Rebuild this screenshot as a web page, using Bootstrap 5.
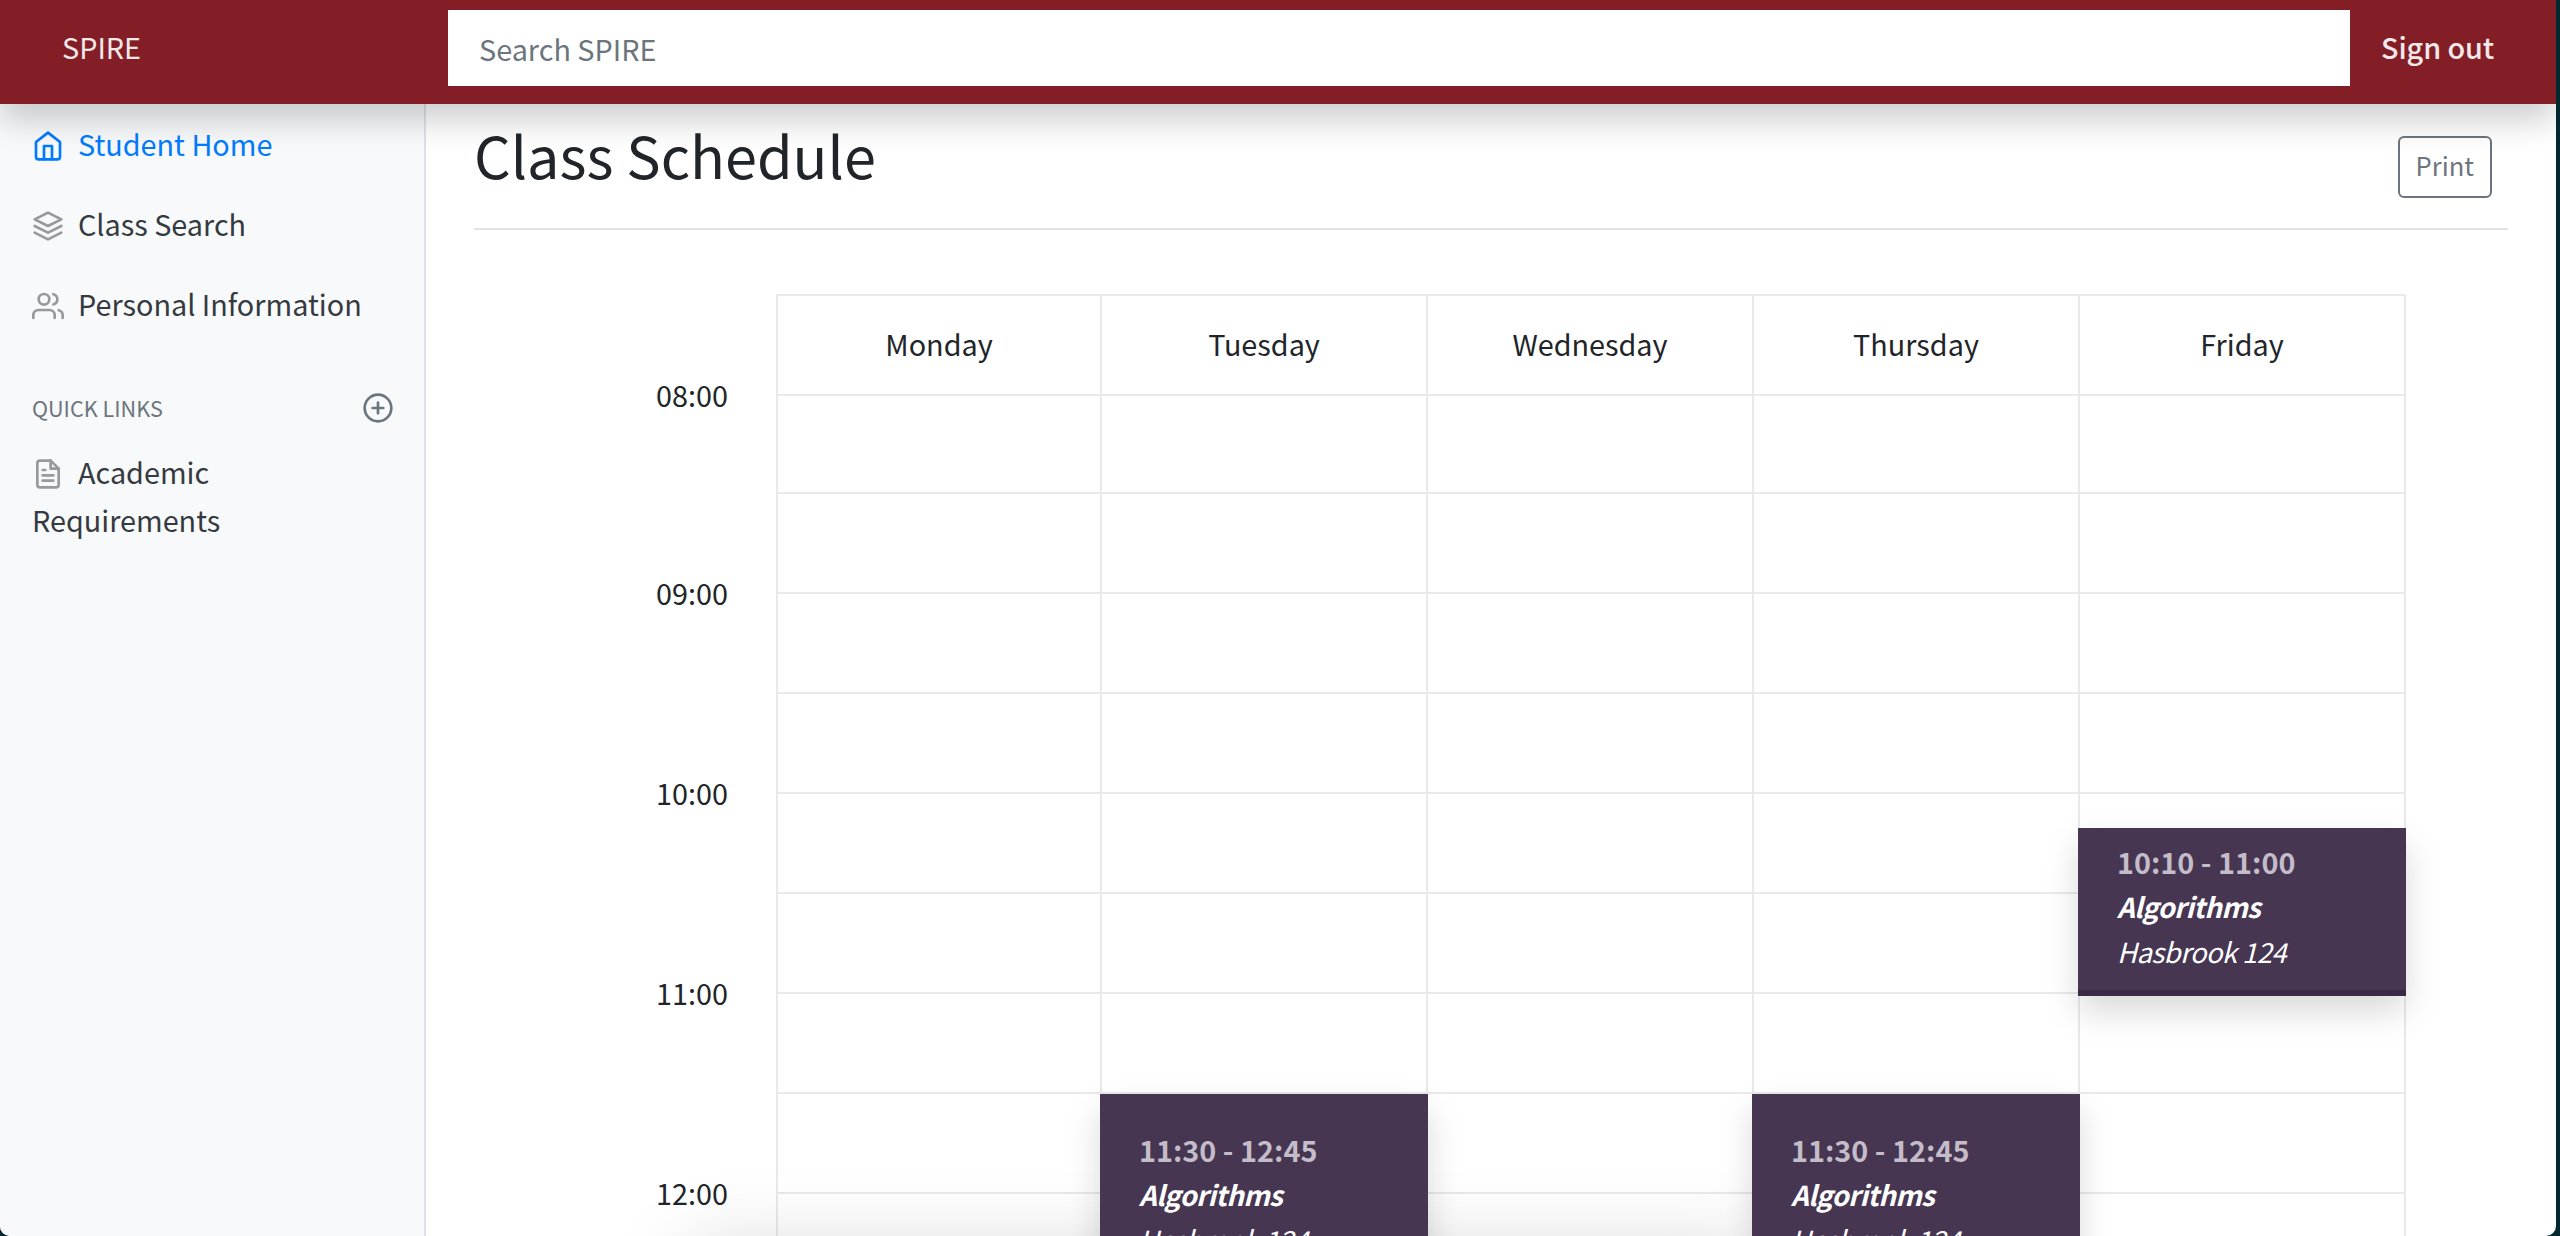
<!DOCTYPE html>
<html lang="en">
<head>
  <meta charset="UTF-8">
  <title>SPIRE</title>
  <link href="https://cdn.jsdelivr.net/npm/bootstrap@5.3.3/dist/css/bootstrap.min.css" rel="stylesheet">
  <style>
    html, body { height: 100%; overflow: hidden; }
    body { font-family: "Noto Sans CJK SC", "Noto Sans", sans-serif; font-size: 28.8px; line-height: 48px; color: #212529; background: #04282f; }
    .app-window { width: 2556px; height: 1236px; background: #fff; position: relative; overflow: hidden; border-radius: 0 0 10px 10px; }

    .topbar { height: 104px; padding: 10px 0 0; background: #841e26; position: relative; z-index: 5; align-items: flex-start; flex-wrap: nowrap; box-shadow: 0 16px 32px rgba(0,0,0,.2); }
    .topbar a { color: #f1e8e9; text-decoration: none; padding: 13px 0; }
    .brand-link { width: 448px; padding-left: 62px !important; flex: none; }
    .topbar .search-box { flex: 1; width: auto; height: 76px; border: 0; border-radius: 0; padding: 0 31px; font-size: 28.8px; line-height: 48px; }
    .search-box::placeholder { color: #6c757d; opacity: 1; }
    .signout-link { width: 206px; flex: none; padding-left: 31px !important; font-weight: 500; letter-spacing: -.1px; }

    .side-panel { width: 426px; height: 1132px; flex: none; background: #f8f9fa; border-right: 2px solid #dee2e6; }
    .side-link { display: block; padding: 16px 32px; color: #343a40; text-decoration: none; white-space: nowrap; }
    .side-link svg, .doc-link svg { width: 32px; height: 32px; margin-right: 14px; vertical-align: -6px; color: #999; }
    .side-link.current, .side-link.current svg { color: #007bff; }
    .side-head { display: flex; justify-content: space-between; align-items: center; padding: 0 30px 0 32px; margin-top: 46px; font-size: 21.6px; line-height: 36px; color: #6c757d; }
    .side-head svg { width: 32px; height: 32px; }
    .doc-link { display: block; padding: 22px 32px 0; color: #343a40; text-decoration: none; }

    .main-col { flex: 1; padding: 0 48px; }
    .title-row { height: 126px; border-bottom: 2px solid #e1e3e5; align-items: flex-start; justify-content: space-between; }
    .title-row h1 { font-size: 57.6px; line-height: 76px; margin: 12px 0 0; font-weight: 400; }
    .print-btn { font-size: 25.6px; line-height: 42px; color: #6c757d; border: 2px solid #6c757d; padding: 6px 16px 10px; margin: 32px 16px 0 0; border-radius: 6px; background: #fff; }

    .cal-wrap { position: relative; margin-top: 64px; }
    .cal-grid { display: grid; grid-template-columns: 302px repeat(5, 326px); grid-auto-rows: 100px; grid-template-rows: 102px 98px; }
    .day-cell { border: solid #e9e9e9; border-width: 2px 2px 2px 0; padding-bottom: 2px; display: flex; align-items: center; justify-content: center; color: #212529; }
    .day-cell.first-col, .slot-cell.first-col { border-left-width: 2px; }
    .slot-cell { border: solid #e9e9e9; border-width: 0 2px 2px 0; }
    .hour-cell { text-align: right; padding-right: 48px; margin-top: -25px; }

    .class-block { position: absolute; z-index: 1; width: 328px; display: flex; flex-direction: column; justify-content: center; background: #463652; border-bottom: 6px solid #3b2a47; padding: 0 0 6px 39px; color: #fff; line-height: 45px; font-size: 27.5px; letter-spacing: -.6px; font-style: italic; box-shadow: 0 16px 32px rgba(0,0,0,.15); }
    .class-block b { font-weight: 700; }
    .class-block .when { font-size: 28.8px; letter-spacing: 0; font-style: normal; font-weight: 700; color: #c4bcc9; }
    .block-fri { left: 1604px; top: 534px; height: 168px; }
    .block-tue { left: 626px; top: 800px; height: 212px; }
    .block-thu { left: 1278px; top: 800px; height: 212px; }
    .bottom-shade { position: absolute; left: 216px; top: 952px; width: 1070px; height: 200px; box-shadow: 0 0 80px rgba(0,0,0,.15); }
  </style>
</head>
<body>
<div class="app-window">
  <nav class="topbar navbar">
    <a class="brand-link" href="#">SPIRE</a>
    <input class="search-box form-control" type="text" placeholder="Search SPIRE">
    <a class="signout-link" href="#">Sign out</a>
  </nav>

  <div class="d-flex">
    <div class="side-panel">
      <a class="side-link current" href="#">
        <svg viewBox="0 0 24 24" fill="none" stroke="currentColor" stroke-width="2" stroke-linecap="round" stroke-linejoin="round"><path d="M3 9l9-7 9 7v11a2 2 0 0 1-2 2H5a2 2 0 0 1-2-2z"/><polyline points="9 22 9 12 15 12 15 22"/></svg>Student Home
      </a>
      <a class="side-link" href="#">
        <svg viewBox="0 0 24 24" fill="none" stroke="currentColor" stroke-width="2" stroke-linecap="round" stroke-linejoin="round"><polygon points="12 2 2 7 12 12 22 7 12 2"/><polyline points="2 17 12 22 22 17"/><polyline points="2 12 12 17 22 12"/></svg>Class Search
      </a>
      <a class="side-link" href="#">
        <svg viewBox="0 0 24 24" fill="none" stroke="currentColor" stroke-width="2" stroke-linecap="round" stroke-linejoin="round"><path d="M17 21v-2a4 4 0 0 0-4-4H5a4 4 0 0 0-4 4v2"/><circle cx="9" cy="7" r="4"/><path d="M23 21v-2a4 4 0 0 0-3-3.87"/><path d="M16 3.13a4 4 0 0 1 0 7.75"/></svg>Personal Information
      </a>
      <div class="side-head">
        <span>QUICK LINKS</span>
        <svg viewBox="0 0 24 24" fill="none" stroke="currentColor" stroke-width="2" stroke-linecap="round" stroke-linejoin="round"><circle cx="12" cy="12" r="10"/><line x1="12" y1="8" x2="12" y2="16"/><line x1="8" y1="12" x2="16" y2="12"/></svg>
      </div>
      <a class="doc-link" href="#">
        <svg viewBox="0 0 24 24" fill="none" stroke="currentColor" stroke-width="2" stroke-linecap="round" stroke-linejoin="round"><path d="M14 2H6a2 2 0 0 0-2 2v16a2 2 0 0 0 2 2h12a2 2 0 0 0 2-2V8z"/><polyline points="14 2 14 8 20 8"/><line x1="16" y1="13" x2="8" y2="13"/><line x1="16" y1="17" x2="8" y2="17"/><polyline points="10 9 9 9 8 9"/></svg>Academic Requirements
      </a>
    </div>

    <div class="main-col">
      <div class="title-row d-flex">
        <h1>Class Schedule</h1>
        <button class="print-btn" type="button">Print</button>
      </div>

      <div class="cal-wrap">
        <div class="cal-grid" id="calGrid">
          <div></div>
          <div class="day-cell first-col">Monday</div>
          <div class="day-cell">Tuesday</div>
          <div class="day-cell">Wednesday</div>
          <div class="day-cell">Thursday</div>
          <div class="day-cell">Friday</div>
        </div>

        <div class="bottom-shade"></div>
        <div class="class-block block-fri"><span class="when">10:10 - 11:00</span><b>Algorithms</b><span>Hasbrook 124</span></div>
        <div class="class-block block-tue"><span class="when">11:30 - 12:45</span><b>Algorithms</b><span>Hasbrook 124</span></div>
        <div class="class-block block-thu"><span class="when">11:30 - 12:45</span><b>Algorithms</b><span>Hasbrook 124</span></div>
      </div>
    </div>
  </div>
</div>

<script>
  const grid = document.getElementById('calGrid');
  const hours = ['08:00', '09:00', '10:00', '11:00', '12:00'];
  for (let r = 0; r < 10; r++) {
    const hour = document.createElement('div');
    hour.className = 'hour-cell';
    hour.textContent = r % 2 === 0 ? hours[r / 2] : '';
    grid.appendChild(hour);
    for (let d = 0; d < 5; d++) {
      const cell = document.createElement('div');
      cell.className = d === 0 ? 'slot-cell first-col' : 'slot-cell';
      grid.appendChild(cell);
    }
  }
</script>
<script src="https://cdn.jsdelivr.net/npm/bootstrap@5.3.3/dist/js/bootstrap.bundle.min.js"></script>
</body>
</html>
